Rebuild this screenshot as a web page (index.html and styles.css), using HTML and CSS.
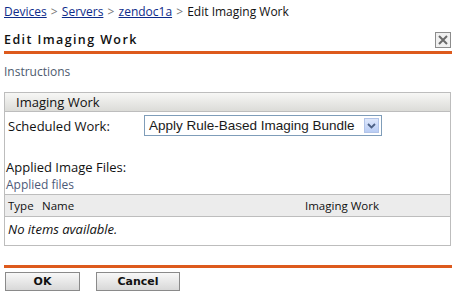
FILE: index.html
```html
<!DOCTYPE html>
<html lang="en">
<head>
  <meta charset="UTF-8">
  <title>Edit Imaging Work</title>
  <link rel="stylesheet" href="styles.css">
</head>
<body>

<div class="crumbs">
  <a href="#">Devices</a> <span class="sep">&gt;</span>
  <a href="#">Servers</a> <span class="sep">&gt;</span>
  <a href="#">zendoc1a</a> <span class="sep">&gt;</span>
  <span class="here">Edit Imaging Work</span>
</div>

<div class="titlebar">
  <h1>Edit Imaging Work</h1>
  <span class="close">
    <svg width="10" height="10" viewBox="0 0 10 10"><path d="M1 1L9 9M9 1L1 9" stroke="#6a6a6a" stroke-width="2"/></svg>
  </span>
</div>

<p class="instr">Instructions</p>

<div class="box">
  <div class="box-head">Imaging Work</div>
  <div class="row">
    <label>Scheduled Work:</label>
    <div class="select">
      <span>Apply Rule-Based Imaging Bundle</span>
      <span class="arrow">
        <svg width="9" height="6" viewBox="0 0 9 6"><path d="M1 1L4.5 4.5L8 1" stroke="#4d6185" stroke-width="1.8" fill="none"/></svg>
      </span>
    </div>
  </div>

  <div class="files-title">Applied Image Files:</div>
  <div class="files-sub">Applied files</div>

  <div class="thead">
    <span class="col-type">Type</span>
    <span class="col-name">Name</span>
    <span class="col-work">Imaging Work</span>
  </div>
  <div class="empty">No items available.</div>
</div>

<div class="footer">
  <button class="btn btn-ok">OK</button>
  <button class="btn btn-cancel">Cancel</button>
</div>

</body>
</html>
```

FILE: styles.css
```css
body {
  margin: 0;
  padding: 0 5px 0 4px;
  font-family: "Open Sans", "DejaVu Sans", sans-serif;
  color: #111;
  background: #fff;
}
.crumbs {
  font-size: 12px;
  padding-top: 3px;
  height: 18px;
}
.crumbs a {
  color: #0d2b8a;
  text-decoration: underline;
}
.crumbs .sep {
  color: #777;
  margin: 0 1px;
}
.crumbs .here {
  font-weight: 500;
}
.titlebar {
  display: flex;
  justify-content: space-between;
  align-items: flex-end;
  margin-top: 11px;
  border-bottom: 3px solid #dd5a1d;
  padding-bottom: 3px;
}
h1 {
  margin: 0;
  font-size: 12.5px;
  font-weight: 600;
  letter-spacing: 1.4px;
  line-height: 16px;
}
.close {
  width: 14px;
  height: 14px;
  border: 1px solid #8c8c8c;
  background: #f0f0f0;
  display: flex;
  align-items: center;
  justify-content: center;
  margin-right: 1px;
}
.instr {
  margin: 10px 0 0;
  font-size: 12px;
  color: #4d5a6e;
  line-height: 16px;
}
.box {
  margin-top: 12px;
  border: 1px solid #bdbdbd;
  margin-right: 1px;
}
.box-head {
  height: 18px;
  line-height: 18px;
  padding-left: 11px;
  font-size: 13px;
  font-weight: 500;
  background: linear-gradient(#f7f7f5, #dcdcd8);
  border-bottom: 1px solid #bdbdbd;
}
.row {
  display: flex;
  align-items: center;
  padding: 3px 0 0 3px;
}
.row label {
  width: 136px;
  font-size: 13px;
  font-weight: 500;
}
.select {
  width: 232px;
  height: 19px;
  border: 1px solid #7f9db9;
  display: flex;
  align-items: center;
  justify-content: space-between;
  font-family: "Liberation Sans", Arial, sans-serif;
  font-size: 13.5px;
  color: #1a1a1a;
  padding-left: 4px;
  box-sizing: content-box;
}
.arrow {
  width: 15px;
  height: 15px;
  margin-right: 2px;
  background: linear-gradient(#dfe8fb, #b9cdf5);
  border: 1px solid #b2c4e8;
  box-sizing: border-box;
  display: flex;
  align-items: center;
  justify-content: center;
}
.files-title {
  margin-top: 23px;
  padding-left: 1px;
  font-size: 13px;
  font-weight: 500;
  line-height: 17px;
}
.files-sub {
  padding-left: 1px;
  font-size: 12px;
  color: #4d5a78;
  line-height: 17px;
}
.thead {
  margin-top: 1px;
  display: flex;
  height: 21px;
  align-items: center;
  background: #ececec;
  border-top: 1px solid #bdbdbd;
  border-bottom: 1px solid #bdbdbd;
  font-size: 11.5px;
  font-weight: 500;
  padding-left: 3px;
}
.col-type {
  width: 34px;
}
.col-name {
  width: 263px;
}
.empty {
  font-style: italic;
  font-size: 13px;
  padding: 4px 0 7px 3px;
  line-height: 17px;
}
.footer {
  margin-top: 19px;
  border-top: 3px solid #dd5a1d;
  padding-top: 4px;
  display: flex;
  gap: 16px;
}
.btn {
  height: 19px;
  padding: 0;
  border: 1px solid #8a8a8a;
  background: linear-gradient(#f8f8f8, #d8d8d8);
  font-family: "DejaVu Sans", Verdana, sans-serif;
  font-weight: bold;
  font-size: 11px;
  color: #111;
  margin-left: 1px;
}
.btn-ok {
  width: 75px;
}
.btn-cancel {
  width: 84px;
  margin-left: 0;
}
```
